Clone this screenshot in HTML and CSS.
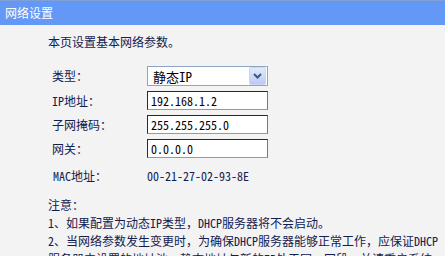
FILE: index.html
```html
<!DOCTYPE html>
<html lang="zh-CN">
<head>
    <meta charset="UTF-8">
    <title>网络设置</title>
    <link rel="stylesheet" href="styles.css">
</head>
<body>
    <div class="title-bar">网络设置</div>
    <div class="content">
        <p class="intro">本页设置基本网络参数。</p>

        <div class="form">
            <span class="label">类型：</span>
            <div class="select">
                <span class="select-value">静态IP</span>
                <span class="select-arrow">
                    <svg width="9" height="6" viewBox="0 0 9 6"><path d="M1 1 L4.5 4.5 L8 1" fill="none" stroke="#3f5688" stroke-width="2"/></svg>
                </span>
            </div>

            <span class="label">IP地址：</span>
            <div class="field">192.168.1.2</div>

            <span class="label">子网掩码：</span>
            <div class="field">255.255.255.0</div>

            <span class="label">网关：</span>
            <div class="field">0.0.0.0</div>

            <span class="label mac-label">MAC地址：</span>
            <span class="mac-value">00-21-27-02-93-8E</span>
        </div>

        <div class="notes">
            <div>注意：</div>
            <div>1、如果配置为动态IP类型<span class="fw">，</span>DHCP服务器将不会启动。</div>
            <div>2、当网络参数发生变更时<span class="fw">，</span>为确保DHCP服务器能够正常工作<span class="fw">，</span>应保证DHCP</div>
            <div>服务器中设置的地址池、静态地址与新的IP处于同一网段<span class="fw">，</span>并请重启系统。</div>
        </div>
    </div>
</body>
</html>
```

FILE: styles.css
```css
body {
    margin: 0;
    background: #f3f3f3;
    font-family: "Noto Sans CJK SC", "Liberation Sans", sans-serif;
    font-size: 12px;
    font-feature-settings: "hwid";
    color: #13204e;
    overflow: hidden;
}
.fw {
    font-feature-settings: normal;
}
.title-bar {
    height: 24px;
    line-height: 24px;
    border-top: 1px solid #7f9fd6;
    background: #6498f6;
    color: #fff;
    padding-left: 5px;
    font-size: 12px;
}
.content {
    padding-left: 48px;
}
.intro {
    margin: 8px 0 0;
    line-height: 18px;
}
.form {
    display: grid;
    grid-template-columns: 95px 121px;
    row-gap: 5px;
    margin-top: 15px;
    padding-left: 4px;
    align-items: center;
}
.label {
    line-height: 18px;
}
.select {
    display: flex;
    align-items: center;
    justify-content: space-between;
    height: 20px;
    box-sizing: border-box;
    border: 1px solid #8fa5c4;
    background: #fff;
    padding: 0 1px 0 5px;
    font-size: 13px;
    color: #000;
}
.select-arrow {
    display: flex;
    align-items: center;
    justify-content: center;
    width: 15px;
    height: 16px;
    border: 1px solid #c9d6f6;
    border-radius: 2px;
    background: linear-gradient(#e2eafc, #b9cbf3);
}
.field {
    height: 19px;
    line-height: 17px;
    box-sizing: border-box;
    border: 1px solid #2a2a2a;
    border-right-color: #777;
    border-bottom-color: #999;
    background: #fff;
    padding-left: 3px;
    color: #000;
}
.mac-label,
.mac-value {
    margin-top: 4px;
}
.mac-label {
    padding-left: 1px;
}
.mac-value {
    line-height: 18px;
}
.notes {
    margin-top: 11px;
    line-height: 18px;
    white-space: nowrap;
}
```
